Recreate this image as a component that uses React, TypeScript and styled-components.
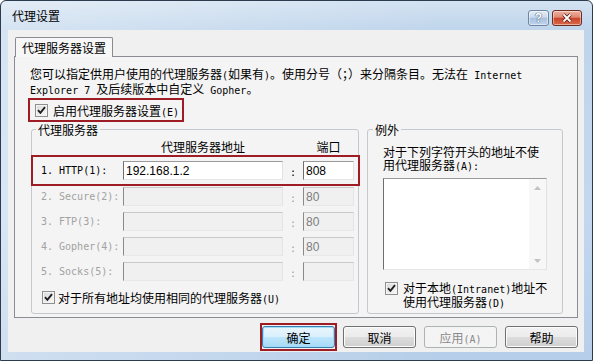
import styled, { createGlobalStyle, css } from "styled-components";

const GlobalStyle = createGlobalStyle`
  * { box-sizing: border-box; }
  html, body { margin: 0; padding: 0; width: 593px; height: 361px; overflow: hidden; }
  body {
    font-family: "Noto Sans CJK SC", "Liberation Sans", sans-serif;
    font-size: 12px;
    color: #000;
  }
`;

const mark = css`
  border: 2px solid #9e1d25;
`;

const Window = styled.div`
  width: 593px;
  height: 361px;
  display: flex;
  flex-direction: column;
  padding: 0 8px 8px 7px;
  border: 1px solid #2c3b4e;
  border-radius: 6px 6px 0 0;
  background:
    linear-gradient(90deg, rgba(255, 255, 255, 0.35), rgba(255, 255, 255, 0) 75%),
    linear-gradient(180deg, #d3e2f1 0px, #bfd5ec 29px, #c3d8ef 60%, #b6cee9 100%);
`;

const TitleBar = styled.div`
  height: 29px;
  flex: none;
  display: flex;
  align-items: flex-start;
  padding-left: 4px;
`;

const Title = styled.div`
  line-height: 29px;
  font-size: 12px;
`;

const CaptionButtons = styled.div`
  display: flex;
  gap: 3px;
  margin: 9px 2px 0 auto;
`;

const CaptionButton = styled.div<{ $close?: boolean }>`
  width: ${(p) => (p.$close ? 30 : 21)}px;
  height: 16px;
  display: flex;
  align-items: center;
  justify-content: center;
  border-radius: 3px;
  border: 1px solid ${(p) => (p.$close ? "#6e2b20" : "#6f86a3")};
  box-shadow: inset 0 0 0 1px rgba(255, 255, 255, 0.45);
  background: ${(p) =>
    p.$close
      ? "linear-gradient(180deg, #eeb0a0 0%, #e08a73 45%, #c9442b 50%, #d9694c 100%)"
      : "linear-gradient(180deg, #e6eef7 0%, #cbdaec 45%, #a9c0dc 50%, #bfd4ec 100%)"};
`;

const HelpGlyph = styled.span`
  font: bold 12px "Liberation Sans", sans-serif;
  line-height: 14px;
  color: #fff;
  text-shadow: 0 0 1px #2c4a73, 0 0 1px #2c4a73;
`;

const Client = styled.div`
  flex: 1;
  display: flex;
  flex-direction: column;
  padding: 6px 6px 0 6px;
  background: #f0f0f0;
`;

const TabStrip = styled.div`
  display: flex;
  margin-top: 1px;
  padding-left: 1px;
  margin-bottom: -1px;
`;

const Tab = styled.div`
  position: relative;
  z-index: 1;
  height: 20px;
  padding: 0 6px;
  line-height: 19px;
  border: 1px solid #898c95;
  border-bottom: none;
  border-radius: 2px 2px 0 0;
  background: #f7f7f7;
`;

const TabPage = styled.div`
  height: 262px;
  flex: none;
  display: flex;
  flex-direction: column;
  align-items: flex-start;
  padding: 9px 14px 0 15px;
  border: 1px solid #898c95;
  background: #f4f4f4;
`;

const Lat = styled.span`
  font-family: "DejaVu Sans Mono", "Liberation Mono", monospace;
  font-size: 10px;
`;

const Intro = styled.p`
  margin: 0;
  padding-top: 1px;
  line-height: 13px;
  white-space: nowrap;
`;

const CheckRow = styled.div<{ $gap: number }>`
  display: flex;
  align-items: center;
  gap: ${(p) => p.$gap}px;
  white-space: nowrap;
`;

const EnableMark = styled(CheckRow)`
  ${mark};
  height: 24px;
  margin: 1px 0 0 -2px;
  padding: 0 3px 0 5px;
`;

const Box = styled.span`
  width: 13px;
  height: 13px;
  flex: none;
  display: flex;
  align-items: center;
  justify-content: center;
  border: 1px solid #8e8f8f;
  box-shadow: inset 0 0 0 1px #f4f4f4;
  background: linear-gradient(135deg, #d8d8d8, #fbfbfb);
`;

const Groups = styled.div`
  display: flex;
  gap: 8px;
  height: 191px;
  margin: 1px 0 0 1px;
`;

const Group = styled.fieldset<{ $width: number }>`
  width: ${(p) => p.$width}px;
  margin: 0;
  padding: 0;
  min-width: 0;
  border: 1px solid #c4c9ce;
  border-radius: 3px;
`;

const Legend = styled.legend<{ $offset: number }>`
  margin-left: ${(p) => p.$offset}px;
  padding: 0 2px;
  line-height: 13px;
`;

const ProxyBody = styled.div`
  padding: 4px 3px 0 9px;
`;

const columns = css`
  display: grid;
  grid-template-columns: 82px 160px 20px 51px;
`;

const HeadRow = styled.div`
  ${columns};
  line-height: 13px;
  margin-bottom: 2px;
`;

const HeadCell = styled.div<{ $col: number }>`
  grid-column: ${(p) => p.$col};
  text-align: center;
`;

const ProxyRow = styled.div<{ $disabled?: boolean }>`
  ${columns};
  align-items: start;
  height: 25px;
  padding-top: 1px;
  line-height: 19px;
  color: ${(p) => (p.$disabled ? "#a2a2a2" : "#000")};
`;

const HttpRow = styled(ProxyRow)`
  ${mark};
  height: 31px;
  margin: 0 -5px 0 -10px;
  padding: 4px 3px 4px 8px;
`;

const Colon = styled.div`
  text-align: center;
`;

const Field = styled.input`
  width: 100%;
  height: 19px;
  margin: 0;
  padding: 0 2px;
  border: 1px solid;
  border-color: #9a9a9a #e2e2e2 #e6e6e6 #6f6f6f;
  border-radius: 0;
  outline: none;
  background: #fff;
  color: #000;
  font: 12px "Liberation Sans", sans-serif;

  &:disabled {
    background: #f0f0f0;
    color: #7d7d7d;
    border-color: #c8c8c8 #e4e4e4 #e8e8e8 #8a8a8a;
  }
`;

const SameRow = styled(CheckRow)`
  height: 16px;
  margin: 3px 0 0 1px;
`;

const ExceptBody = styled.div`
  padding: 9px 15px 0 15px;
`;

const ExceptText = styled.div`
  line-height: 13px;
  white-space: nowrap;
`;

const ListBox = styled.div`
  height: 92px;
  margin-top: 5px;
  display: flex;
  border: 1px solid;
  border-color: #9a9a9a #e2e2e2 #e6e6e6 #6f6f6f;
  background: #fff;
`;

const ListArea = styled.div`
  flex: 1;
`;

const ScrollBar = styled.div`
  width: 17px;
  display: flex;
  flex-direction: column;
  justify-content: space-between;
  background: #f7f7f7;
`;

const ScrollArrow = styled.div`
  height: 17px;
  display: flex;
  align-items: center;
  justify-content: center;
`;

const LocalRow = styled.div`
  display: flex;
  align-items: flex-start;
  gap: 5px;
  margin: 12px 0 0 2px;
  line-height: 12px;
  white-space: nowrap;
`;

const Buttons = styled.div`
  display: flex;
  justify-content: flex-end;
  align-items: center;
  gap: 8px;
  margin-top: 8px;
`;

const Button = styled.button<{ $default?: boolean }>`
  width: 73px;
  height: 22px;
  margin: 0;
  padding: 0;
  border-radius: 3px;
  font: 12px "Noto Sans CJK SC", sans-serif;
  color: #000;
  border: 1px solid ${(p) => (p.$default ? "#3c7fb1" : "#707070")};
  box-shadow: inset 0 0 0 1px ${(p) => (p.$default ? "#9fdcf8" : "#fcfcfc")};
  background: ${(p) =>
    p.$default
      ? "linear-gradient(180deg, #eaf6fd 0%, #d9f0fc 50%, #bee6fd 50%, #a7d9f5 100%)"
      : "linear-gradient(180deg, #f2f2f2 0%, #ebebeb 50%, #dddddd 50%, #cfcfcf 100%)"};

  &:disabled {
    border-color: #adb2b5;
    box-shadow: none;
    background: #f4f4f4;
    color: #8a8a8a;
  }
`;

const OkMark = styled.div`
  ${mark};
  display: flex;
  padding: 1px 0;
  margin: -3px -2px;
`;

function Check() {
  return (
    <Box>
      <svg width="9" height="9" viewBox="0 0 9 9">
        <path d="M1 4.2 L3.4 6.8 L8 1.2" fill="none" stroke="#1e1e1e" strokeWidth="1.9" />
      </svg>
    </Box>
  );
}

function Arrow({ up }: { up?: boolean }) {
  return (
    <ScrollArrow>
      <svg width="7" height="4" viewBox="0 0 7 4">
        <path d={up ? "M0 4 L3.5 0 L7 4 Z" : "M0 0 L3.5 4 L7 0 Z"} fill="#c2c2c2" />
      </svg>
    </ScrollArrow>
  );
}

const proxies = [
  { name: "HTTP", host: "192.168.1.2", port: "808" },
  { name: "Secure", host: "", port: "80" },
  { name: "FTP", host: "", port: "80" },
  { name: "Gopher", host: "", port: "80" },
  { name: "Socks", host: "", port: "" },
];

export default function App() {
  return (
    <>
      <GlobalStyle />
      <Window>
        <TitleBar>
          <Title>代理设置</Title>
          <CaptionButtons>
            <CaptionButton>
              <HelpGlyph>?</HelpGlyph>
            </CaptionButton>
            <CaptionButton $close>
              <svg width="12" height="10" viewBox="0 0 12 10">
                <path d="M2.5 1.5 L9.5 8.5 M9.5 1.5 L2.5 8.5" stroke="#5a1a10" strokeWidth="3.4" />
                <path d="M2.5 1.5 L9.5 8.5 M9.5 1.5 L2.5 8.5" stroke="#fff" strokeWidth="1.8" />
              </svg>
            </CaptionButton>
          </CaptionButtons>
        </TitleBar>

        <Client>
          <TabStrip>
            <Tab>代理服务器设置</Tab>
          </TabStrip>
          <TabPage>
            <Intro>
              您可以指定供用户使用的代理服务器<Lat>(</Lat>如果有<Lat>)</Lat>。使用分号（；）来分隔条目。无法在<Lat> Internet</Lat>
              <br />
              <Lat>Explorer 7 </Lat>及后续版本中自定义<Lat> Gopher</Lat>。
            </Intro>

            <EnableMark $gap={5}>
              <Check />
              <span>
                启用代理服务器设置<Lat>(E)</Lat>
              </span>
            </EnableMark>

            <Groups>
              <Group $width={328}>
                <Legend $offset={4}>代理服务器</Legend>
                <ProxyBody>
                  <HeadRow>
                    <HeadCell $col={2}>代理服务器地址</HeadCell>
                    <HeadCell $col={4}>端口</HeadCell>
                  </HeadRow>
                  {proxies.map((p, i) => {
                    const Row = i === 0 ? HttpRow : ProxyRow;
                    return (
                      <Row key={p.name} $disabled={i > 0}>
                        <Lat>{`${i + 1}. ${p.name}(${i + 1}):`}</Lat>
                        <Field disabled={i > 0} readOnly defaultValue={p.host} />
                        <Colon>
                          <Lat>:</Lat>
                        </Colon>
                        <Field disabled={i > 0} readOnly defaultValue={p.port} />
                      </Row>
                    );
                  })}
                  <SameRow $gap={3}>
                    <Check />
                    <span>
                      对于所有地址均使用相同的代理服务器<Lat>(U)</Lat>
                    </span>
                  </SameRow>
                </ProxyBody>
              </Group>

              <Group $width={196}>
                <Legend $offset={5}>例外</Legend>
                <ExceptBody>
                  <ExceptText>
                    对于下列字符开头的地址不使
                    <br />
                    用代理服务器<Lat>(A):</Lat>
                  </ExceptText>
                  <ListBox>
                    <ListArea />
                    <ScrollBar>
                      <Arrow up />
                      <Arrow />
                    </ScrollBar>
                  </ListBox>
                  <LocalRow>
                    <Check />
                    <span>
                      对于本地<Lat>(Intranet)</Lat>地址不
                      <br />
                      使用代理服务器<Lat>(D)</Lat>
                    </span>
                  </LocalRow>
                </ExceptBody>
              </Group>
            </Groups>
          </TabPage>

          <Buttons>
            <OkMark>
              <Button $default>确定</Button>
            </OkMark>
            <Button>取消</Button>
            <Button disabled>
              应用<Lat>(A)</Lat>
            </Button>
            <Button>帮助</Button>
          </Buttons>
        </Client>
      </Window>
    </>
  );
}
